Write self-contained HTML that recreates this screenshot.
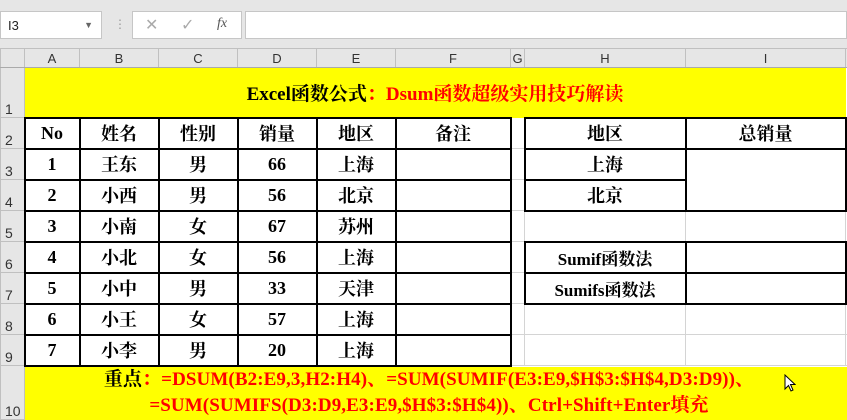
<!DOCTYPE html>
<html><head><meta charset="utf-8"><style>
body{margin:0;width:847px;height:420px;overflow:hidden;background:#fff;font-family:"Liberation Sans",sans-serif;position:relative}
.top{position:absolute;left:0;top:0;width:847px;height:48px;background:#e6e6e6}
.box{position:absolute;background:#fff;border:1px solid #c6c6c6;box-sizing:border-box}
table{position:absolute;left:0;top:48px;width:855px;border-collapse:collapse;table-layout:fixed}
td{border:1px solid #d4d4d4;padding:0;text-align:center;font-family:"Liberation Serif","Noto Serif CJK SC",serif;font-weight:bold;font-size:18px;color:#000;overflow:hidden;white-space:nowrap}
tr.h td{background:#e6e6e6;font-family:"Liberation Sans",sans-serif;font-weight:normal;font-size:13px;color:#333;border-color:#c0c0c0;border-bottom:1px solid #aaa}
td.rh{background:#e6e6e6;font-family:"Liberation Sans",sans-serif;font-weight:normal;font-size:14px;color:#333;text-align:left;vertical-align:bottom;padding-left:4px;border-color:#c0c0c0}
td.b{border:2px solid #000}
.y{background:#ff0}
.r{color:#f00}
</style></head><body>
<div class="top"></div>
<div class="box" style="left:0;top:11px;width:102px;height:28px;font-size:13px;padding:6px 0 0 7px;color:#222">I3<span style="position:absolute;right:8px;top:8px;font-size:9px;color:#666">▼</span></div>
<div style="position:absolute;left:114px;top:17px;color:#999;font-size:12px">⋮</div>
<div class="box" style="left:132px;top:11px;width:110px;height:28px;color:#aaa;font-size:16px"><span style="position:absolute;left:12px;top:3px">✕</span><span style="position:absolute;left:48px;top:3px">✓</span><span style="position:absolute;left:84px;top:4px;color:#555;font-family:'Liberation Serif',serif;font-style:italic;font-size:14px">fx</span></div>
<div class="box" style="left:245px;top:11px;width:602px;height:28px"></div>
<table>
<colgroup><col style="width:24px"><col style="width:55px"><col style="width:79px"><col style="width:79px"><col style="width:79px"><col style="width:79px"><col style="width:115px"><col style="width:14px"><col style="width:161px"><col style="width:160px"><col style="width:10px"></colgroup>
<tr class="h" style="height:19px"><td style="background:#e6e6e6"></td><td>A</td><td>B</td><td>C</td><td>D</td><td>E</td><td>F</td><td>G</td><td>H</td><td>I</td><td></td></tr>
<tr style="height:50px"><td class="rh">1</td><td colspan="9" class="y" style="border-color:#ff0;font-size:19px">Excel函数公式<span class="r">：Dsum函数超级实用技巧解读</span></td><td></td></tr>
<tr style="height:31px"><td class="rh">2</td><td class="b">No</td><td class="b">姓名</td><td class="b">性别</td><td class="b">销量</td><td class="b">地区</td><td class="b">备注</td><td></td><td class="b">地区</td><td class="b">总销量</td><td></td></tr>
<tr style="height:31px"><td class="rh">3</td><td class="b">1</td><td class="b">王东</td><td class="b">男</td><td class="b">66</td><td class="b">上海</td><td class="b"></td><td></td><td class="b">上海</td><td class="b" rowspan="2"></td><td></td></tr>
<tr style="height:31px"><td class="rh">4</td><td class="b">2</td><td class="b">小西</td><td class="b">男</td><td class="b">56</td><td class="b">北京</td><td class="b"></td><td></td><td class="b">北京</td><td></td></tr>
<tr style="height:31px"><td class="rh">5</td><td class="b">3</td><td class="b">小南</td><td class="b">女</td><td class="b">67</td><td class="b">苏州</td><td class="b"></td><td></td><td></td><td></td><td></td></tr>
<tr style="height:31px"><td class="rh">6</td><td class="b">4</td><td class="b">小北</td><td class="b">女</td><td class="b">56</td><td class="b">上海</td><td class="b"></td><td></td><td class="b" style="font-size:17px">Sumif函数法</td><td class="b"></td><td></td></tr>
<tr style="height:31px"><td class="rh">7</td><td class="b">5</td><td class="b">小中</td><td class="b">男</td><td class="b">33</td><td class="b">天津</td><td class="b"></td><td></td><td class="b" style="font-size:17px">Sumifs函数法</td><td class="b"></td><td></td></tr>
<tr style="height:31px"><td class="rh">8</td><td class="b">6</td><td class="b">小王</td><td class="b">女</td><td class="b">57</td><td class="b">上海</td><td class="b"></td><td></td><td></td><td></td><td></td></tr>
<tr style="height:31px"><td class="rh">9</td><td class="b">7</td><td class="b">小李</td><td class="b">男</td><td class="b">20</td><td class="b">上海</td><td class="b"></td><td></td><td></td><td></td><td></td></tr>
<tr style="height:53px"><td class="rh">10</td><td colspan="10" class="y" style="border-color:#ff0;font-size:19px;line-height:26px;letter-spacing:0.1px;padding-right:22px">重点<span class="r">：=DSUM(B2:E9,3,H2:H4)、=SUM(SUMIF(E3:E9,$H$3:$H$4,D3:D9))、<br>=SUM(SUMIFS(D3:D9,E3:E9,$H$3:$H$4))、Ctrl+Shift+Enter填充</span></td></tr>
</table>
<svg style="position:absolute;left:784px;top:374px" width="12" height="20" viewBox="0 0 12 20"><path d="M1 1 L1 15 L4.5 11.5 L7 17 L9 16 L6.5 10.5 L11 10.5 Z" fill="#fff" stroke="#000" stroke-width="1"/></svg>
</body></html>
